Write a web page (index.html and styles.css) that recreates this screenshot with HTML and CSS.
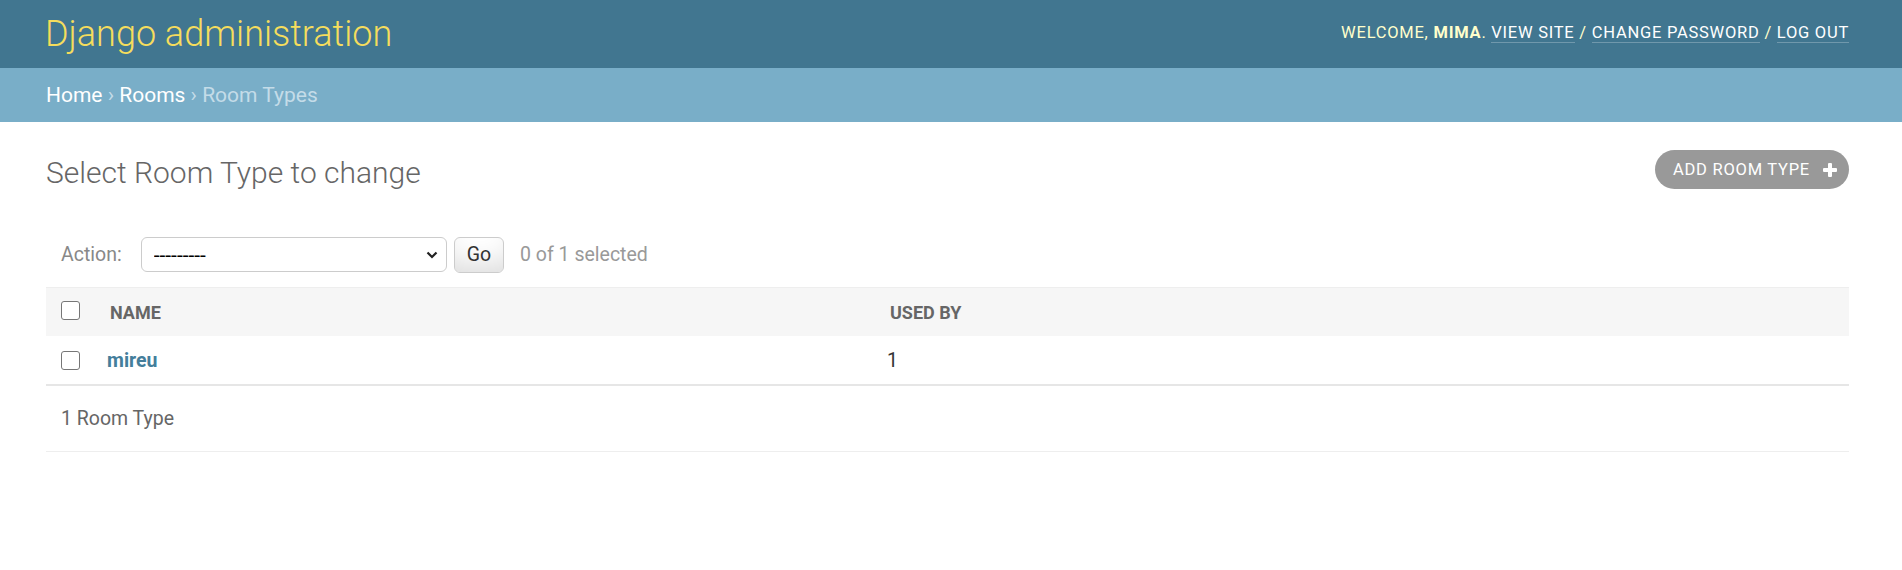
FILE: index.html
```html
<!DOCTYPE html>
<html>
<head>
  <title>Select Room Type to change | Django site admin</title>
  <meta charset="utf-8">
  <link rel="stylesheet" href="styles.css">
</head>
<body>
  <div class="header">
    <div class="branding"><a href="#" class="site-name">Django administration</a></div>
    <div class="user-tools">
      Welcome, <strong>mima</strong>.
      <a href="#">View site</a> /
      <a href="#">Change password</a> /
      <a href="#">Log out</a>
    </div>
  </div>
  <div class="breadcrumbs">
    <a href="#">Home</a> &rsaquo; <a href="#">Rooms</a> &rsaquo; Room Types
  </div>

  <div class="content">
    <div class="title-row">
      <h1>Select Room Type to change</h1>
      <a href="#" class="addlink">
        Add Room Type
        <svg class="plus" width="14" height="14" viewBox="0 0 14 14">
          <rect x="5" y="0" width="4" height="14" rx="1" fill="#fff"/>
          <rect x="0" y="5" width="14" height="4" rx="1" fill="#fff"/>
        </svg>
      </a>
    </div>

    <div class="actions">
      <label>Action:</label>
      <span class="select-wrap">
        <select class="action-select">
          <option>---------</option>
          <option>Delete selected room types</option>
        </select>
        <svg class="chevron" width="12" height="8" viewBox="0 0 12 8">
          <path d="M1.5 1.5 L6 6 L10.5 1.5" fill="none" stroke="#222" stroke-width="2.2"/>
        </svg>
      </span>
      <button class="go">Go</button>
      <span class="counter">0 of 1 selected</span>
    </div>

    <table class="result-list">
      <colgroup>
        <col class="col-check">
        <col class="col-name">
        <col>
      </colgroup>
      <thead>
        <tr>
          <th class="check"><input type="checkbox" class="box"></th>
          <th>Name</th>
          <th>Used by</th>
        </tr>
      </thead>
      <tbody>
        <tr>
          <td class="check"><input type="checkbox" class="box"></td>
          <th class="field-name"><a href="#">mireu</a></th>
          <td class="field-count">1</td>
        </tr>
      </tbody>
    </table>
    <p class="paginator">1 Room Type</p>
  </div>
</body>
</html>
```

FILE: styles.css
```css
body {
  margin: 0;
  font-family: Roboto, "Liberation Sans", sans-serif;
  font-size: 21px;
  color: #333;
  background: #fff;
}
a {
  color: #447e9b;
  text-decoration: none;
}

.header {
  display: flex;
  justify-content: space-between;
  align-items: center;
  height: 68px;
  box-sizing: border-box;
  padding: 0 53px 0 45px;
  background: #417690;
  color: #ffc;
}
.site-name {
  font-size: 36px;
  font-weight: 300;
  line-height: 42px;
  color: #f5dd5d;
}
.user-tools {
  font-size: 16.5px;
  letter-spacing: 0.75px;
  text-transform: uppercase;
  margin-bottom: 4px;
}
.user-tools strong {
  font-weight: 700;
}
.user-tools a {
  color: #fff;
  border-bottom: 1.5px solid rgba(255,255,255,.25);
}

.breadcrumbs {
  height: 54px;
  box-sizing: border-box;
  padding: 15px 53px 15px 46px;
  line-height: 24px;
  background: #79aec8;
  color: #c4dce8;
}
.breadcrumbs a {
  color: #fff;
}

.content {
  padding: 33px 53px 0 46px;
}
.title-row {
  display: flex;
  justify-content: space-between;
  align-items: flex-start;
}
h1 {
  margin: 0;
  font-size: 30px;
  font-weight: 300;
  line-height: 36px;
  color: #666;
}
.addlink {
  display: flex;
  align-items: center;
  height: 39px;
  box-sizing: border-box;
  margin-top: -5px;
  padding: 0 12px 0 18px;
  border-radius: 20px;
  background: #999;
  color: #fff;
  font-size: 16.5px;
  letter-spacing: 0.75px;
  text-transform: uppercase;
}
.plus {
  margin-left: 13px;
}

.actions {
  display: flex;
  align-items: center;
  margin-top: 31px;
  padding: 15px;
  height: 35px;
  color: #888;
  font-size: 19.5px;
}
.actions label {
  margin-right: 19px;
}
.select-wrap {
  position: relative;
  display: inline-block;
}
.action-select {
  -webkit-appearance: none;
  appearance: none;
  width: 306px;
  height: 35px;
  padding: 0 0 0 12px;
  border: 1px solid #ccc;
  border-radius: 6px;
  background: #fff;
  font-family: Roboto, "Liberation Sans", sans-serif;
  font-size: 21px;
  color: #000;
}
.chevron {
  position: absolute;
  right: 9px;
  top: 14px;
}
.go {
  height: 36px;
  margin-left: 7px;
  padding: 0 12px;
  border: 1px solid #ccc;
  border-radius: 6px;
  background: #fff;
  box-shadow: 0 -22px 30px -15px rgba(0,0,0,.15) inset;
  font-family: Roboto, "Liberation Sans", sans-serif;
  font-size: 19.5px;
  color: #333;
}
.counter {
  margin-left: 16px;
  color: #999;
}

.result-list {
  width: 100%;
  table-layout: fixed;
  border-collapse: separate;
  border-spacing: 0;
}
.col-check {
  width: 49px;
}
.col-name {
  width: 780px;
}
.result-list th,
.result-list td {
  box-sizing: border-box;
  padding: 0 12px;
  text-align: left;
  vertical-align: middle;
}
.result-list thead th {
  height: 49px;
  padding-left: 15px;
  border-top: 1px solid #eee;
  background: #f6f6f6;
  color: #666;
  font-size: 18px;
  font-weight: 700;
  text-transform: uppercase;
}
.result-list tbody td,
.result-list tbody th {
  height: 50px;
  border-bottom: 2px solid #e6e6e6;
  font-size: 19.5px;
}
.result-list .check {
  padding: 0 0 0 15px;
}
.result-list .field-name {
  font-weight: 700;
}
.box {
  -webkit-appearance: none;
  appearance: none;
  display: block;
  width: 19px;
  height: 19px;
  margin: 0;
  border: 1px solid #767676;
  border-radius: 3px;
  background: #fff;
}
thead .box {
  margin-top: -3px;
}

.paginator {
  margin: 0;
  padding: 16px 15px;
  line-height: 33px;
  border-bottom: 1px solid #eee;
  font-size: 19.5px;
  color: #666;
}
```
